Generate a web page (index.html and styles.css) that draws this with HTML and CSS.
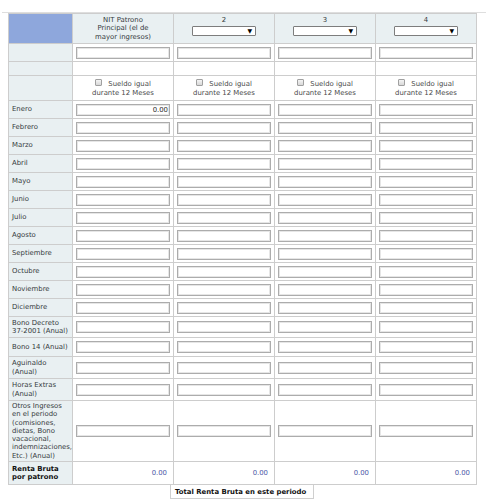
FILE: index.html
```html
<!DOCTYPE html>
<html lang="es">
<head>
<meta charset="utf-8">
<title>Renta Bruta</title>
<link rel="stylesheet" href="styles.css">
</head>
<body>
<div class="frame">
<div class="sheet">
<table class="grid">
<colgroup><col class="c-lab"><col class="c-dat"><col class="c-dat"><col class="c-dat"><col class="c-dat"></colgroup>
<tr class="r-head">
<td class="corner"></td>
<td class="head">NIT Patrono<br>Principal (el de<br>mayor ingresos)</td>
<td class="head"><div class="num">2</div><div class="sel"><select></select><span class="arrow">▼</span></div></td>
<td class="head"><div class="num">3</div><div class="sel"><select></select><span class="arrow">▼</span></div></td>
<td class="head"><div class="num">4</div><div class="sel"><select></select><span class="arrow">▼</span></div></td>
</tr>
<tr class="r-nit">
<td class="lab"></td>
<td><input class="txt" type="text"></td>
<td><input class="txt" type="text"></td>
<td><input class="txt" type="text"></td>
<td><input class="txt" type="text"></td>
</tr>
<tr class="r-gap"><td class="lab"></td><td></td><td></td><td></td><td></td></tr>
<tr class="r-chk">
<td class="lab"></td>
<td class="chk"><label><input type="checkbox" class="box"> Sueldo igual<br>durante 12 Meses</label></td>
<td class="chk"><label><input type="checkbox" class="box"> Sueldo igual<br>durante 12 Meses</label></td>
<td class="chk"><label><input type="checkbox" class="box"> Sueldo igual<br>durante 12 Meses</label></td>
<td class="chk"><label><input type="checkbox" class="box"> Sueldo igual<br>durante 12 Meses</label></td>
</tr>
<tr class="r-m"><td class="lab">Enero</td><td><input class="txt amt" type="text" value="0.00"></td><td><input class="txt" type="text"></td><td><input class="txt" type="text"></td><td><input class="txt" type="text"></td></tr>
<tr class="r-m"><td class="lab">Febrero</td><td><input class="txt" type="text"></td><td><input class="txt" type="text"></td><td><input class="txt" type="text"></td><td><input class="txt" type="text"></td></tr>
<tr class="r-m"><td class="lab">Marzo</td><td><input class="txt" type="text"></td><td><input class="txt" type="text"></td><td><input class="txt" type="text"></td><td><input class="txt" type="text"></td></tr>
<tr class="r-m"><td class="lab">Abril</td><td><input class="txt" type="text"></td><td><input class="txt" type="text"></td><td><input class="txt" type="text"></td><td><input class="txt" type="text"></td></tr>
<tr class="r-m"><td class="lab">Mayo</td><td><input class="txt" type="text"></td><td><input class="txt" type="text"></td><td><input class="txt" type="text"></td><td><input class="txt" type="text"></td></tr>
<tr class="r-m"><td class="lab">Junio</td><td><input class="txt" type="text"></td><td><input class="txt" type="text"></td><td><input class="txt" type="text"></td><td><input class="txt" type="text"></td></tr>
<tr class="r-m"><td class="lab">Julio</td><td><input class="txt" type="text"></td><td><input class="txt" type="text"></td><td><input class="txt" type="text"></td><td><input class="txt" type="text"></td></tr>
<tr class="r-m"><td class="lab">Agosto</td><td><input class="txt" type="text"></td><td><input class="txt" type="text"></td><td><input class="txt" type="text"></td><td><input class="txt" type="text"></td></tr>
<tr class="r-m"><td class="lab">Septiembre</td><td><input class="txt" type="text"></td><td><input class="txt" type="text"></td><td><input class="txt" type="text"></td><td><input class="txt" type="text"></td></tr>
<tr class="r-m"><td class="lab">Octubre</td><td><input class="txt" type="text"></td><td><input class="txt" type="text"></td><td><input class="txt" type="text"></td><td><input class="txt" type="text"></td></tr>
<tr class="r-m"><td class="lab">Noviembre</td><td><input class="txt" type="text"></td><td><input class="txt" type="text"></td><td><input class="txt" type="text"></td><td><input class="txt" type="text"></td></tr>
<tr class="r-m"><td class="lab">Diciembre</td><td><input class="txt" type="text"></td><td><input class="txt" type="text"></td><td><input class="txt" type="text"></td><td><input class="txt" type="text"></td></tr>
<tr class="r-bd"><td class="lab">Bono Decreto 37-2001 (Anual)</td><td><input class="txt" type="text"></td><td><input class="txt" type="text"></td><td><input class="txt" type="text"></td><td><input class="txt" type="text"></td></tr>
<tr class="r-b14"><td class="lab">Bono 14 (Anual)</td><td><input class="txt" type="text"></td><td><input class="txt" type="text"></td><td><input class="txt" type="text"></td><td><input class="txt" type="text"></td></tr>
<tr class="r-ag"><td class="lab">Aguinaldo (Anual)</td><td><input class="txt" type="text"></td><td><input class="txt" type="text"></td><td><input class="txt" type="text"></td><td><input class="txt" type="text"></td></tr>
<tr class="r-he"><td class="lab">Horas Extras (Anual)</td><td><input class="txt" type="text"></td><td><input class="txt" type="text"></td><td><input class="txt" type="text"></td><td><input class="txt" type="text"></td></tr>
<tr class="r-ot"><td class="lab">Otros Ingresos en el periodo (comisiones, dietas, Bono vacacional, indemnizaciones, Etc.) (Anual)</td><td><input class="txt" type="text"></td><td><input class="txt" type="text"></td><td><input class="txt" type="text"></td><td><input class="txt" type="text"></td></tr>
<tr class="r-rb"><td class="lab strong">Renta Bruta por patrono</td><td class="val">0.00</td><td class="val">0.00</td><td class="val">0.00</td><td class="val">0.00</td></tr>
</table>
<table class="total"><tr><td>Total Renta Bruta en este periodo</td></tr></table>
</div>
</div>
</body>
</html>
```

FILE: styles.css
```css
html, body {
  margin: 0;
  padding: 0;
  background: #ffffff;
}
body {
  padding-top: 12px;
  font-family: "DejaVu Sans", Verdana, sans-serif;
  font-size: 6.9px;
  line-height: 8.3px;
  color: #363b40;
}
.frame {
  margin-left: 2px;
  padding-left: 6px;
  border-top: 1px solid #dedede;
}
.sheet {
  width: 468px;
}
.grid {
  border-collapse: collapse;
  table-layout: fixed;
  width: 468px;
}
.c-lab { width: 64px; }
.c-dat { width: 101px; }
.grid td {
  border: 1px solid #cdcdcd;
  padding: 0 3px;
  vertical-align: middle;
  background: #ffffff;
}
.grid td.lab {
  background: #e9f0f2;
  padding: 0 3px;
}
.grid td.corner {
  background: #8ea7dc;
}
.grid td.head {
  background: #e9f0f2;
  text-align: center;
  vertical-align: top;
  padding-top: 2px;
}
.num {
  height: 9px;
  line-height: 9px;
}
.sel {
  position: relative;
  width: 64px;
  height: 10px;
  margin: 1px auto 0;
}
.sel select {
  appearance: none;
  -webkit-appearance: none;
  display: block;
  width: 64px;
  height: 10px;
  margin: 0;
  padding: 0;
  border: 1px solid #7d7d7d;
  border-radius: 1px;
  background: #ffffff;
  box-sizing: border-box;
}
.arrow {
  position: absolute;
  right: 4px;
  top: 1px;
  font-size: 6px;
  line-height: 8px;
  color: #000000;
}
.txt {
  display: block;
  box-sizing: border-box;
  width: 94px;
  height: 12px;
  margin: 0 auto;
  padding: 0 2px;
  border: 1px solid #acacac;
  box-shadow: inset 0 0 0 1px #e6e6e6;
  border-radius: 0;
  background: #ffffff;
  font-family: "DejaVu Sans", Verdana, sans-serif;
  font-size: 6.9px;
  color: #2a2a2a;
  outline: none;
}
.amt {
  text-align: right;
  padding-right: 1px;
}
.grid td.chk {
  text-align: center;
  color: #4a4a4a;
}
.box {
  appearance: none;
  -webkit-appearance: none;
  display: inline-block;
  width: 7px;
  height: 7px;
  margin: 0 4px 0 0;
  vertical-align: 0;
  border: 1px solid #a0a0a0;
  border-radius: 1px;
  background: linear-gradient(#f4f4f4, #d8d8d8);
}
.r-head { height: 30px; }
.r-nit { height: 18px; }
.r-gap { height: 14px; }
.r-chk { height: 25px; }
.r-m { height: 18px; }
.r-bd { height: 21px; }
.r-b14 { height: 19px; }
.r-ag { height: 22px; }
.r-he { height: 22px; }
.r-ot { height: 61px; }
.r-rb { height: 23px; }
.grid td.strong {
  font-weight: bold;
  color: #111111;
}
.grid td.val {
  text-align: right;
  padding-right: 6px;
  color: #4a56a6;
}
.total {
  border-collapse: collapse;
  width: 144px;
  margin: 0 auto;
}
.total td {
  border: 1px solid #cfcfcf;
  border-top: none;
  padding: 3px 4px 2px;
  font-weight: bold;
  color: #111111;
  white-space: nowrap;
}
```
